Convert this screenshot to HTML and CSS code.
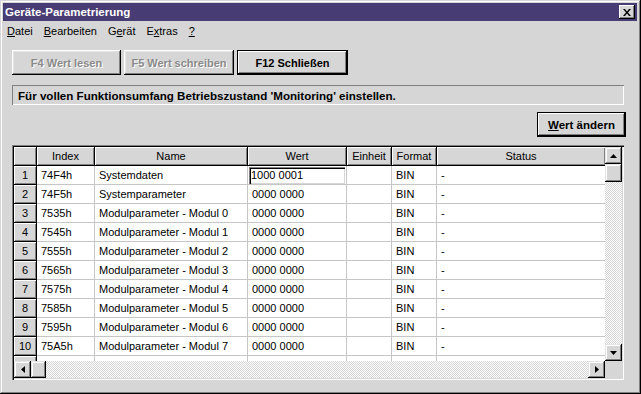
FILE: index.html
```html
<!DOCTYPE html>
<html lang="de">
<head>
    <meta charset="UTF-8">
    <title>Geräte-Parametrierung</title>
    <link rel="stylesheet" href="styles.css">
</head>
<body>
    <div class = "window_main">
        <div class = "bar_title">
            <span class = "text_title">Geräte-Parametrierung</span>
            <span class = "btn_close">
                <svg width="8" height="7" viewBox="0 0 8 7"><path d="M0 0h2l2 2.5L6 0h2L5 3.5 8 7H6L4 4.5 2 7H0l3-3.5z" fill="#000"/></svg>
            </span>
        </div>

        <div class = "bar_menu">
            <span><u>D</u>atei</span>
            <span><u>B</u>earbeiten</span>
            <span>G<u>e</u>rät</span>
            <span>E<u>x</u>tras</span>
            <span><u>?</u></span>
        </div>

        <div class = "row_buttons">
            <button class = "btn_win btn_disabled btn_read">F4 Wert lesen</button>
            <button class = "btn_win btn_disabled btn_write">F5 Wert schreiben</button>
            <button class = "btn_win btn_default btn_close_dlg">F12 Schließen</button>
        </div>

        <div class = "box_message">Für vollen Funktionsumfang Betriebszustand 'Monitoring' einstellen.</div>

        <div class = "row_edit">
            <button class = "btn_win btn_default btn_edit"><u>W</u>ert ändern</button>
        </div>

        <div class = "box_grid">
            <div class = "area_table">
                <table class = "table_param">
                    <colgroup>
                        <col style="width:23px">
                        <col style="width:58px">
                        <col style="width:153px">
                        <col style="width:99px">
                        <col style="width:45px">
                        <col style="width:45px">
                        <col style="width:169px">
                    </colgroup>
                    <thead>
                        <tr>
                            <th></th>
                            <th>Index</th>
                            <th>Name</th>
                            <th>Wert</th>
                            <th>Einheit</th>
                            <th>Format</th>
                            <th>Status</th>
                        </tr>
                    </thead>
                    <tbody>
                        <tr>
                            <td class = "cell_rowhead">1</td>
                            <td>74F4h</td>
                            <td>Systemdaten</td>
                            <td class = "cell_editing"><div class = "field_edit">1000 0001</div></td>
                            <td></td>
                            <td>BIN</td>
                            <td>-</td>
                        </tr>
                        <tr>
                            <td class = "cell_rowhead">2</td>
                            <td>74F5h</td>
                            <td>Systemparameter</td>
                            <td>0000 0000</td>
                            <td></td>
                            <td>BIN</td>
                            <td>-</td>
                        </tr>
                        <tr>
                            <td class = "cell_rowhead">3</td>
                            <td>7535h</td>
                            <td>Modulparameter - Modul 0</td>
                            <td>0000 0000</td>
                            <td></td>
                            <td>BIN</td>
                            <td>-</td>
                        </tr>
                        <tr>
                            <td class = "cell_rowhead">4</td>
                            <td>7545h</td>
                            <td>Modulparameter - Modul 1</td>
                            <td>0000 0000</td>
                            <td></td>
                            <td>BIN</td>
                            <td>-</td>
                        </tr>
                        <tr>
                            <td class = "cell_rowhead">5</td>
                            <td>7555h</td>
                            <td>Modulparameter - Modul 2</td>
                            <td>0000 0000</td>
                            <td></td>
                            <td>BIN</td>
                            <td>-</td>
                        </tr>
                        <tr>
                            <td class = "cell_rowhead">6</td>
                            <td>7565h</td>
                            <td>Modulparameter - Modul 3</td>
                            <td>0000 0000</td>
                            <td></td>
                            <td>BIN</td>
                            <td>-</td>
                        </tr>
                        <tr>
                            <td class = "cell_rowhead">7</td>
                            <td>7575h</td>
                            <td>Modulparameter - Modul 4</td>
                            <td>0000 0000</td>
                            <td></td>
                            <td>BIN</td>
                            <td>-</td>
                        </tr>
                        <tr>
                            <td class = "cell_rowhead">8</td>
                            <td>7585h</td>
                            <td>Modulparameter - Modul 5</td>
                            <td>0000 0000</td>
                            <td></td>
                            <td>BIN</td>
                            <td>-</td>
                        </tr>
                        <tr>
                            <td class = "cell_rowhead">9</td>
                            <td>7595h</td>
                            <td>Modulparameter - Modul 6</td>
                            <td>0000 0000</td>
                            <td></td>
                            <td>BIN</td>
                            <td>-</td>
                        </tr>
                        <tr>
                            <td class = "cell_rowhead">10</td>
                            <td>75A5h</td>
                            <td>Modulparameter - Modul 7</td>
                            <td>0000 0000</td>
                            <td></td>
                            <td>BIN</td>
                            <td>-</td>
                        </tr>
                        <tr>
                            <td class = "cell_rowhead">11</td>
                            <td>75B5h</td>
                            <td>Modulparameter - Modul 8</td>
                            <td>0000 0000</td>
                            <td></td>
                            <td>BIN</td>
                            <td>-</td>
                        </tr>
                    </tbody>
                </table>
            </div>

            <div class = "scroll_v">
                <div class = "btn_scroll">
                    <svg width="7" height="4" viewBox="0 0 7 4"><path d="M3.5 0L7 4H0z" fill="#000"/></svg>
                </div>
                <div class = "thumb_v"></div>
                <div class = "track_scroll"></div>
                <div class = "btn_scroll">
                    <svg width="7" height="4" viewBox="0 0 7 4"><path d="M0 0h7L3.5 4z" fill="#000"/></svg>
                </div>
            </div>

            <div class = "scroll_h">
                <div class = "btn_scroll">
                    <svg width="4" height="7" viewBox="0 0 4 7"><path d="M0 3.5L4 0v7z" fill="#000"/></svg>
                </div>
                <div class = "thumb_h"></div>
                <div class = "track_scroll"></div>
                <div class = "btn_scroll">
                    <svg width="4" height="7" viewBox="0 0 4 7"><path d="M0 0l4 3.5L0 7z" fill="#000"/></svg>
                </div>
            </div>

            <div class = "corner_scroll"></div>
        </div>
    </div>
</body>
</html>
```

FILE: styles.css
```css
body 
{
    margin: 0;
    padding: 0;
    background-color: #d6d6d6;
    font-family: 'Liberation Sans', Arial, sans-serif;
    font-size: 11px;
    color: #000;
}

.window_main 
{
    width: 641px;
    height: 394px;
    box-sizing: border-box;
    padding: 3px 4px 3px 3px;
    background-color: #d6d6d6;
    box-shadow: inset -1px -1px #000, inset 1px 1px #d6d6d6, inset -2px -2px #808080, inset 2px 2px #fff;
    display: flex;
    flex-direction: column;
}

/* title bar */

.bar_title 
{
    height: 18px;
    background-color: #483c74;
    display: flex;
    align-items: center;
    justify-content: space-between;
    padding: 0 2px 0 2px;
}

.text_title 
{
    color: #fff;
    font-weight: bold;
    font-size: 11.5px;
}

.btn_close 
{
    width: 16px;
    height: 14px;
    background-color: #d6d6d6;
    box-shadow: inset -1px -1px #000, inset 1px 1px #fff, inset -2px -2px #808080;
    display: flex;
    align-items: center;
    justify-content: center;
}

/* menu */

.bar_menu 
{
    height: 19px;
    display: flex;
    align-items: center;
    gap: 11px;
    padding-left: 4px;
}

/* buttons */

.btn_win 
{
    height: 25px;
    padding: 0;
    border: none;
    background-color: #d6d6d6;
    font-family: 'Liberation Sans', Arial, sans-serif;
    font-size: 11px;
    font-weight: bold;
    color: #000;
    box-shadow: inset -1px -1px #000, inset 1px 1px #fff, inset -2px -2px #808080, inset 2px 2px #e4e4e4;
}

.btn_disabled 
{
    color: #8a8a8a;
    text-shadow: 1px 1px #fff;
}

.btn_default 
{
    border: 1px solid #000;
    box-shadow: inset -1px -1px #000, inset 1px 1px #fff, inset -2px -2px #808080;
}

.row_buttons 
{
    display: flex;
    margin-top: 10px;
    padding-left: 9px;
    gap: 3px;
}

.btn_read { width: 109px; }
.btn_write { width: 110px; }
.btn_close_dlg { width: 111px; }

.box_message 
{
    margin: 10px 13px 0 9px;
    height: 20px;
    box-sizing: border-box;
    padding-left: 6px;
    display: flex;
    align-items: center;
    font-weight: bold;
    font-size: 11.6px;
    box-shadow: inset 1px 1px #808080, inset -1px -1px #fff;
}

.row_edit 
{
    display: flex;
    justify-content: flex-end;
    margin-top: 7px;
    padding-right: 11px;
}

.btn_edit 
{
    width: 89px;
    font-size: 11.5px;
}

/* grid */

.box_grid 
{
    margin: 8px 13px 0 9px;
    height: 235px;
    box-sizing: border-box;
    padding: 2px;
    background-color: #d6d6d6;
    box-shadow: inset 1px 1px #808080, inset 2px 2px #000, inset -1px -1px #fff, inset -2px -2px #d6d6d6;
    display: grid;
    grid-template-columns: 1fr 17px;
    grid-template-rows: 1fr 17px;
}

.area_table 
{
    background-color: #fff;
    overflow: hidden;
}

.table_param 
{
    table-layout: fixed;
    width: 592px;
    border-collapse: separate;
    border-spacing: 0;
}

.table_param th 
{
    height: 18px;
    padding: 0;
    font-weight: normal;
    font-size: 11px;
    text-align: center;
    background-color: #d6d6d6;
    border-right: 1px solid #000;
    border-bottom: 1px solid #000;
    box-shadow: inset 1px 1px #fff, inset -1px -1px #808080;
}

.table_param td 
{
    height: 18px;
    padding: 0 0 0 4px;
    font-size: 11px;
    white-space: nowrap;
    overflow: hidden;
    border-right: 1px solid #c6c6c6;
    border-bottom: 1px solid #c6c6c6;
}

.table_param td.cell_rowhead 
{
    padding: 0;
    text-align: center;
    background-color: #d6d6d6;
    border-right: 1px solid #000;
    border-bottom: 1px solid #000;
    box-shadow: inset 1px 1px #fff, inset -1px -1px #808080;
}

.table_param td.cell_editing 
{
    padding: 0 1px;
}

.field_edit 
{
    height: 17px;
    line-height: 17px;
    padding-left: 2px;
    box-shadow: inset 1px 1px #808080, inset 2px 2px #000, inset -1px -1px #d6d6d6;
}

/* scrollbars */

.scroll_v 
{
    display: flex;
    flex-direction: column;
}

.scroll_h 
{
    display: flex;
}

.btn_scroll 
{
    width: 17px;
    height: 17px;
    flex: none;
    background-color: #d6d6d6;
    box-shadow: inset -1px -1px #000, inset 1px 1px #e4e4e4, inset -2px -2px #808080, inset 2px 2px #fff;
    display: flex;
    align-items: center;
    justify-content: center;
}

.thumb_v 
{
    height: 18px;
    flex: none;
    background-color: #d6d6d6;
    box-shadow: inset -1px -1px #000, inset 1px 1px #e4e4e4, inset -2px -2px #808080, inset 2px 2px #fff;
}

.thumb_h 
{
    width: 15px;
    flex: none;
    background-color: #d6d6d6;
    box-shadow: inset -1px -1px #000, inset 1px 1px #e4e4e4, inset -2px -2px #808080, inset 2px 2px #fff;
}

.track_scroll 
{
    flex: 1;
    background: repeating-conic-gradient(#d6d6d6 0 25%, #fff 0 50%) 0 0 / 2px 2px;
}

.corner_scroll 
{
    background-color: #d6d6d6;
}
```
